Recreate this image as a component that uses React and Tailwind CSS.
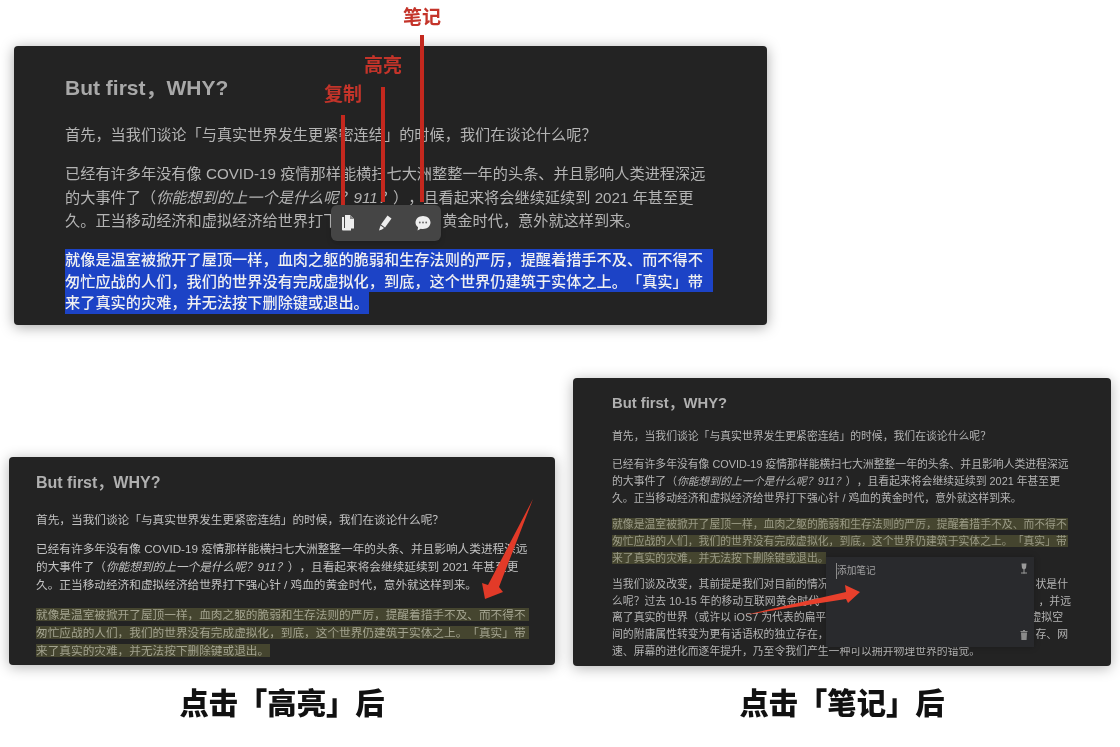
import React from 'react';

const FONT = 'font-["Liberation_Sans","Noto_Sans_CJK_SC",sans-serif]';

const FIRST = '首先，当我们谈论「与真实世界发生更紧密连结」的时候，我们在谈论什么呢？';
const LINE_A = '已经有许多年没有像 COVID-19 疫情那样能横扫七大洲整整一年的头条、并且影响人类进程深远';
const LINE_C = '久。正当移动经济和虚拟经济给世界打下强心针 / 鸡血的黄金时代，意外就这样到来。';
const MARKED = [
    '就像是温室被掀开了屋顶一样，血肉之躯的脆弱和生存法则的严厉，提醒着措手不及、而不得不',
    '匆忙应战的人们，我们的世界没有完成虚拟化，到底，这个世界仍建筑于实体之上。「真实」带',
    '来了真实的灾难，并无法按下删除键或退出。',
];

function LineB() {
    return (
        <>
            的大事件了（<em>你能想到的上一个是什么呢？911？</em>），且看起来将会继续延续到 2021 年甚至更
        </>
    );
}

function CopyIcon() {
    return (
        <svg width="16" height="18" viewBox="0 0 16 18" fill="#eeeeee">
            <path d="M2 3h2v11h7v2.5H3a1 1 0 0 1-1-1z" />
            <path d="M5 1h5l4 4v9.5H5z" />
            <path d="M10 1v4h4z" fill="#8a8a8a" />
        </svg>
    );
}

function PenIcon() {
    return (
        <svg width="16" height="18" viewBox="0 0 16 18" fill="#eeeeee">
            <path d="M10.5 1.5l4 3-6.5 9-4-3z" />
            <path d="M3.5 11.5l3.5 2.6-2 1.4-3 1z" />
        </svg>
    );
}

function ChatIcon() {
    return (
        <svg width="18" height="18" viewBox="0 0 18 18">
            <path d="M9 2c4.2 0 7.5 2.8 7.5 6.5S13.200 15 9 15c-.8 0-1.500-.1-2.200-.3L3.500 16.500l.6-3.200C2.500 12.100 1.500 10.400 1.500 8.500 1.500 4.800 4.800 2 9 2z" fill="#eeeeee" />
            <circle cx="5.800" cy="8.500" r="0.900" fill="#666666" />
            <circle cx="9" cy="8.500" r="0.900" fill="#666666" />
            <circle cx="12.200" cy="8.500" r="0.900" fill="#666666" />
        </svg>
    );
}

function TopPanel() {
    return (
        <div className="relative w-[753px] h-[279px] bg-[#232323] rounded-[4px] shadow-[0_2px_14px_rgba(0,0,0,0.35)] pl-[51px] pt-[28px] text-[15.200px] text-[#b4b4b4] whitespace-nowrap">
            <h2 className="text-[21px] leading-[28px] font-bold text-[#a8a8a8]">But first，WHY?</h2>
            <p className="mt-[21px] leading-[24px]">{FIRST}</p>
            <div className="mt-[15px] leading-[23.500px]">
                <p>{LINE_A}</p>
                <p><LineB /></p>
                <p>{LINE_C}</p>
            </div>
            <div className="mt-[16.500px] leading-[21.500px] text-[#f0f0f0] font-medium">
                <p className="w-[648px] bg-[#1c43c6]">{MARKED[0]}</p>
                <p className="w-[648px] bg-[#1c43c6]">{MARKED[1]}</p>
                <p className="w-[304px] bg-[#1c43c6]">{MARKED[2]}</p>
            </div>
            {/* 选中文字后的浮动工具条 */}
            <div className="absolute left-[317px] top-[159px] w-[110px] h-[36px] bg-[#454545] rounded-[6px] shadow-md flex items-center justify-between px-[9px]">
                <CopyIcon />
                <PenIcon />
                <ChatIcon />
            </div>
        </div>
    );
}

function Callout({ label, boxClass, lineClass }) {
    return (
        <div className={boxClass}>
            <span className="text-[19px] leading-[24px] font-bold text-[#c4342a]">{label}</span>
            <span className={lineClass}></span>
        </div>
    );
}

function HighlightLine({ children, bandClass }) {
    return (
        <div className="h-[18px] flex items-center">
            <span className={bandClass}>{children}</span>
        </div>
    );
}

function LeftPanel() {
    return (
        <div className="w-[546px] h-[208px] bg-[#232323] rounded-[4px] shadow-[0_2px_14px_rgba(0,0,0,0.3)] pl-[27px] pt-[17px] text-[11.670px] leading-[18px] text-[#c2c2c2] whitespace-nowrap">
            <h2 className="text-[16px] leading-[18px] font-bold text-[#b0b0b0]">But first，WHY?</h2>
            <p className="mt-[19px]">{FIRST}</p>
            <div className="mt-[11px]">
                <p>{LINE_A}</p>
                <p><LineB /></p>
                <p>{LINE_C}</p>
            </div>
            <div className="mt-[11px] text-[#a3a38f]">
                <HighlightLine bandClass="w-[493px] leading-[13px] bg-[#45452f]">{MARKED[0]}</HighlightLine>
                <HighlightLine bandClass="w-[493px] leading-[13px] bg-[#45452f]">{MARKED[1]}</HighlightLine>
                <HighlightLine bandClass="w-[234px] leading-[13px] bg-[#45452f]">{MARKED[2]}</HighlightLine>
            </div>
        </div>
    );
}

function PartlyCovered({ left, right, rightClass }) {
    return (
        <div className={rightClass}>
            <span>{left}</span>
            <span>{right}</span>
        </div>
    );
}

function RightPanel() {
    return (
        <div className="relative w-[538px] h-[288px] bg-[#232323] rounded-[4px] shadow-[0_2px_14px_rgba(0,0,0,0.3)] pl-[39px] pt-[17px] text-[10.830px] leading-[16.700px] text-[#b4b4b4] whitespace-nowrap">
            <h2 className="text-[14.800px] leading-[16px] font-bold text-[#b0b0b0]">But first，WHY?</h2>
            <p className="mt-[17px]">{FIRST}</p>
            <div className="mt-[11.500px]">
                <p>{LINE_A}</p>
                <p><LineB /></p>
                <p>{LINE_C}</p>
            </div>
            <div className="mt-[9.500px] text-[#9b9b86]">
                <div className="h-[16.700px] flex items-center"><span className="w-[456px] leading-[12px] bg-[#45452f]">{MARKED[0]}</span></div>
                <div className="h-[16.700px] flex items-center"><span className="w-[456px] leading-[12px] bg-[#45452f]">{MARKED[1]}</span></div>
                <div className="h-[16.700px] flex items-center"><span className="w-[214px] leading-[12px] bg-[#45452f]">{MARKED[2]}</span></div>
            </div>
            <div className="mt-[10px]">
                <PartlyCovered rightClass="w-[456px] flex justify-between" left="当我们谈及改变，其前提是我们对目前的情况" right="状是什" />
                <PartlyCovered rightClass="w-[459px] flex justify-between" left="么呢？过去 10-15 年的移动互联网黄金时代" right="，并远" />
                <PartlyCovered rightClass="w-[451px] flex justify-between" left="离了真实的世界（或许以 iOS7 为代表的扁平" right="虚拟空" />
                <PartlyCovered rightClass="w-[456px] flex justify-between" left="间的附庸属性转变为更有话语权的独立存在，" right="存、网" />
                <p>速、屏幕的进化而逐年提升，乃至令我们产生一种可以拥并物理世界的错觉。</p>
            </div>
            {/* 笔记弹层 */}
            <div className="absolute left-[253px] top-[179px] w-[208px] h-[90px] bg-[#292a2d] flex justify-between pl-[10px] pr-[6px] pt-[6px] pb-[7px] shadow-[0_0_6px_rgba(0,0,0,0.25)]">
                <span className="h-[16px] text-[9.700px] leading-[16px] text-[#a0a0a0] border-l border-[#8a8a8a]">添加笔记</span>
                <div className="flex flex-col justify-between items-center">
                    <svg width="8" height="12" viewBox="0 0 8 12" fill="#9a9a9a">
                        <path d="M1.500 0.500h5l-.5 4.500a2.200 2.200 0 0 1-4 0z" />
                        <rect x="3.500" y="6" width="1" height="4.500" />
                        <rect x="1" y="9.500" width="6" height="1" />
                    </svg>
                    <svg width="8" height="10" viewBox="0 0 8 10" fill="#8a8a8a">
                        <rect x="0.500" y="1" width="7" height="1" />
                        <rect x="3" y="0" width="2" height="1" />
                        <path d="M1 2.500h6l-.4 7.500H1.400z" />
                    </svg>
                </div>
            </div>
        </div>
    );
}

export default function App() {
    return (
        <div className={`relative w-[1120px] h-[747px] bg-white overflow-hidden blur-[0.5px] [text-spacing-trim:space-all] ${FONT}`}>
            <div className="pl-[14px] pt-[46px]">
                <TopPanel />
            </div>

            {/* 标注：复制 / 高亮 / 笔记 */}
            <Callout
                label="复制"
                boxClass="absolute left-[323px] top-[83px] w-[40px] flex flex-col items-center"
                lineClass="w-[4px] h-[90px] mt-[8px] bg-[#c4281e]"
            />
            <Callout
                label="高亮"
                boxClass="absolute left-[363px] top-[54px] w-[40px] flex flex-col items-center"
                lineClass="w-[4px] h-[115px] mt-[9px] bg-[#c4281e]"
            />
            <Callout
                label="笔记"
                boxClass="absolute left-[402px] top-[6px] w-[40px] flex flex-col items-center"
                lineClass="w-[4px] h-[167px] mt-[5px] bg-[#c4281e]"
            />

            <div className="flex items-start pl-[9px] pt-[53px]">
                <div className="w-[546px] pt-[79px] flex flex-col items-center">
                    <LeftPanel />
                    <div className="mt-[18px] text-[29.300px] leading-[42px] font-black text-[#111111]">点击「高亮」后</div>
                </div>
                <div className="ml-[18px] w-[538px] flex flex-col items-center">
                    <RightPanel />
                    <div className="mt-[17px] text-[29.300px] leading-[42px] font-black text-[#111111]">点击「笔记」后</div>
                </div>
            </div>

            {/* 红色箭头 */}
            <svg className="absolute left-[475px] top-[490px]" width="70" height="120" viewBox="0 0 70 120">
                <path d="M58 9L24 97 28 102 10 109 7 93 13 95z" fill="#e23a28" />
            </svg>
            <svg className="absolute left-[740px] top-[580px]" width="130" height="40" viewBox="0 0 130 40">
                <path d="M5 35L106 12 105 5 120 12 108 23 106 19z" fill="#e8402c" />
            </svg>
        </div>
    );
}
